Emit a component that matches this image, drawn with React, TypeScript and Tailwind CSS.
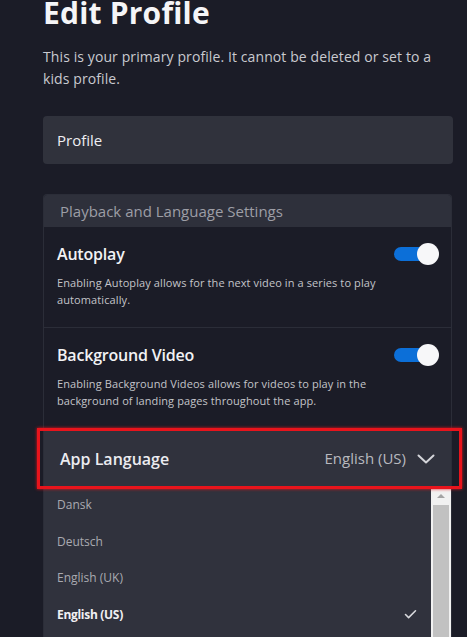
import { Check } from 'lucide-react';

const languages = [
  { name: 'Dansk', selected: false },
  { name: 'Deutsch', selected: false },
  { name: 'English (UK)', selected: false },
  { name: 'English (US)', selected: true },
];

function Toggle() {
  return (
    <div className="relative w-[45px] h-[22px] shrink-0">
      <div className="absolute left-0 top-[4px] w-[37px] h-[14px] rounded-full bg-[#0c6fd8]" />
      <div className="absolute right-0 top-0 w-[22px] h-[22px] rounded-full bg-[#f7f7f9]" />
    </div>
  );
}

function SettingRow({ title, desc, last }: { title: string; desc: string; last?: boolean }) {
  return (
    <div className={last ? 'pt-[17px] pb-[21px] pl-[13px] pr-[12px]' : 'pt-[17px] pb-[19px] pl-[13px] pr-[12px] border-b border-[#2b2d38]'}>
      <div className="flex items-center justify-between h-[20px]">
        <span className="text-[16px] leading-[20px] font-semibold tracking-[-0.2px] text-[#f2f2f4]">{title}</span>
        <Toggle />
      </div>
      <p className="mt-[10px] w-[350px] text-[11px] leading-[17px] tracking-[0.1px] text-[#c3c4c9]">{desc}</p>
    </div>
  );
}

export default function App() {
  return (
    <div className="h-[637px] overflow-hidden bg-[#1b1c27] pl-[43px] pr-[14px]" style={{ fontFamily: '"Open Sans", "Noto Sans", sans-serif' }}>
      <h1 className="pt-[1px] text-[30px] leading-[24px] font-bold tracking-[0.2px] text-[#f5f5f7]">Edit Profile</h1>
      <p className="mt-[21px] text-[14px] leading-[22px] tracking-[0.1px] text-[#c9cad0]">
        This is your primary profile. It cannot be deleted or set to a kids profile.
      </p>

      <div className="mt-[26px] h-[48px] rounded-[4px] bg-[#30323c] flex items-center pl-[14px]">
        <span className="text-[15px] text-[#eeeef2]">Profile</span>
      </div>

      <div className="mt-[30px] mr-[1px] border-x border-t border-[#2b2d38] rounded-t-[4px]">
        <div className="h-[32px] bg-[#2e303b] flex items-center pl-[16px] rounded-t-[3px]">
          <span className="text-[15px] text-[#9d9ea6]">Playback and Language Settings</span>
        </div>
        <SettingRow
          title="Autoplay"
          desc="Enabling Autoplay allows for the next video in a series to play automatically."
        />
        <SettingRow
          last
          title="Background Video"
          desc="Enabling Background Videos allows for videos to play in the background of landing pages throughout the app."
        />

        <div className="relative h-[57px] bg-[#30323d] flex items-center justify-between pl-[16px] pr-[16px]">
          <span className="text-[16px] font-semibold text-[#ececf0]">App Language</span>
          <div className="flex items-center gap-[11px]">
            <span className="text-[15px] text-[#b8b9bf]">English (US)</span>
            <svg width="18" height="10" viewBox="0 0 18 10" fill="none" className="mt-[1px]">
              <polyline points="1.5,1.5 9,8.5 16.5,1.5" stroke="#d4d5da" strokeWidth="2" strokeLinecap="round" strokeLinejoin="round" />
            </svg>
          </div>
          <div className="absolute -left-[7px] -right-[11px] -top-[2px] -bottom-[2px] border-[3px] border-[#e8141c] shadow-[0_0_3px_#e8141c]" />
        </div>

        <div className="flex bg-[#30323d]">
          <div className="flex-1 pl-[13px] pr-[13px]">
            {languages.map(l => (
              <div key={l.name} className="h-[36.5px] flex items-center justify-between">
                <span className={l.selected ? 'text-[12px] font-bold tracking-[-0.3px] text-[#f0f0f3]' : 'text-[12px] text-[#a9aab1]'}>{l.name}</span>
                {l.selected && <Check className="w-[15px] h-[15px] text-[#d8d9dd]" strokeWidth={2.5} />}
              </div>
            ))}
          </div>
          <div className="w-[20px] h-[150px] bg-[#f1f1f1] flex flex-col items-center">
            <div className="h-[18px] flex items-center justify-center">
              <div className="w-0 h-0 border-x-[4px] border-x-transparent border-b-[4px] border-b-[#a3a3a3]" />
            </div>
            <div className="w-[16px] flex-1 bg-[#c1c1c1]" />
          </div>
        </div>
      </div>
    </div>
  );
}
